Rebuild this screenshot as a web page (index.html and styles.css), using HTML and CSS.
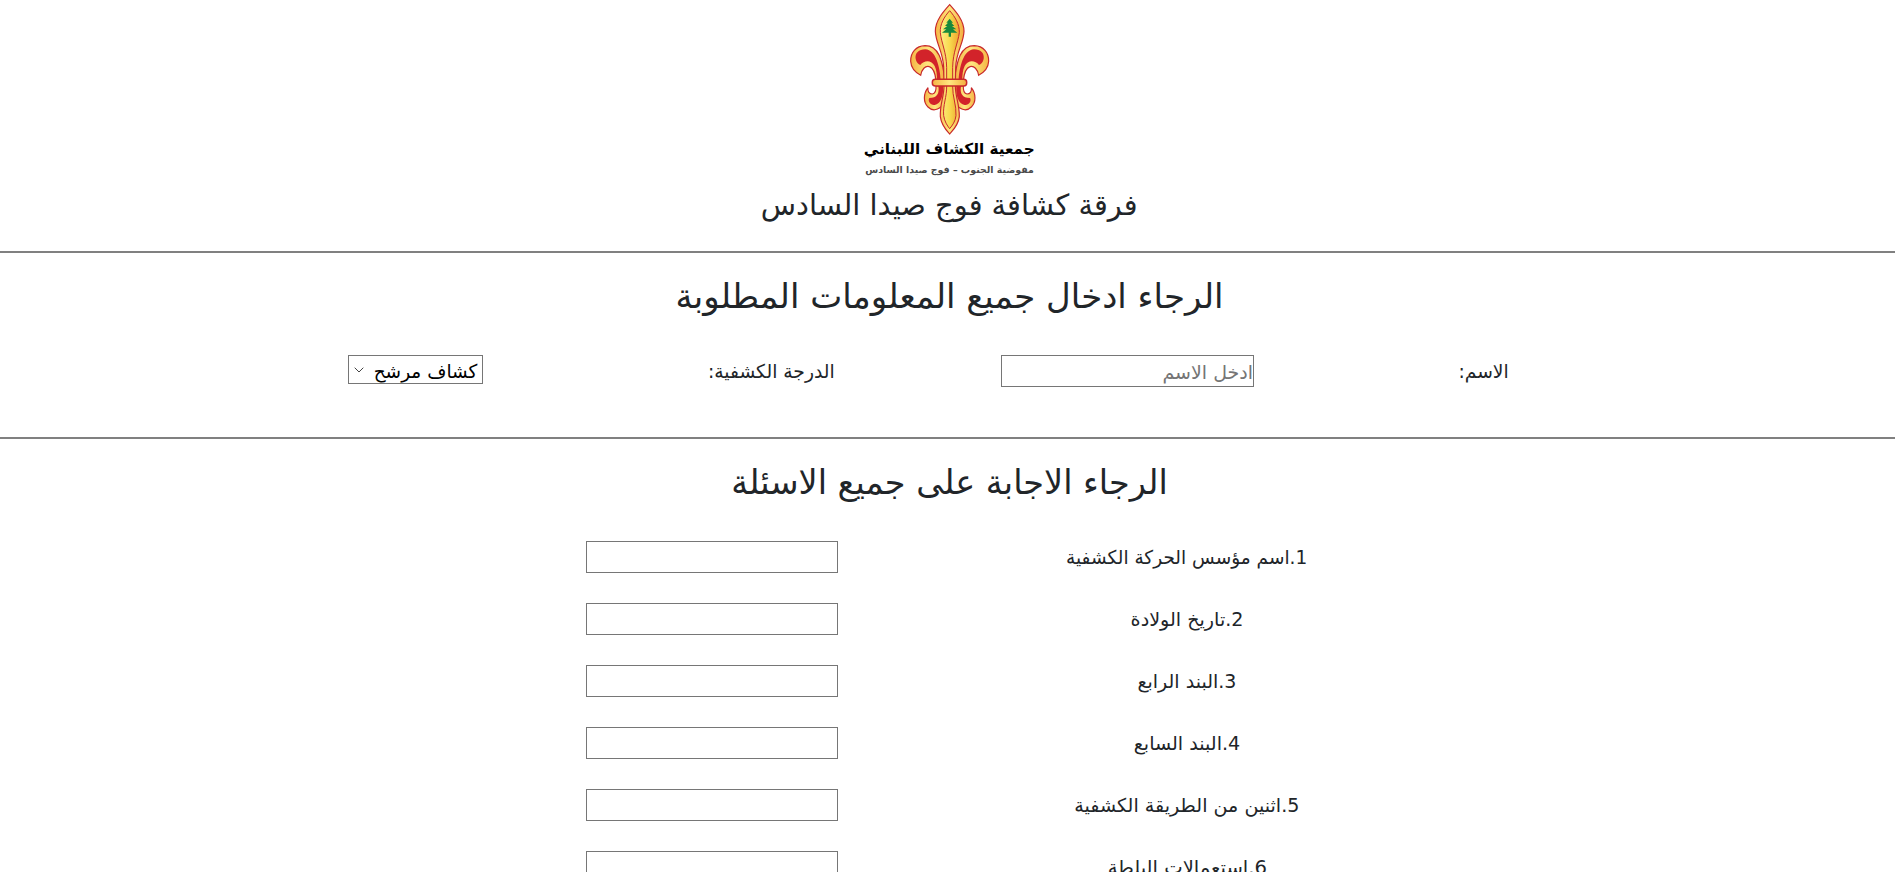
FILE: index.html
```html
<!DOCTYPE html>
<html lang="ar">
<head>
<meta charset="utf-8">
<title>فرقة كشافة فوج صيدا السادس</title>
<link rel="stylesheet" href="styles.css">
</head>
<body>
<div class="page" dir="rtl">
  <header class="header">
    <svg class="emblem" viewBox="0 0 300 420" aria-hidden="true">
      <defs>
        <linearGradient id="gold" x1="0" x2="1" y1="0" y2="0">
          <stop offset="0" stop-color="#f5b544"/><stop offset=".5" stop-color="#ffe680"/><stop offset="1" stop-color="#f3ad3d"/>
        </linearGradient>
        <linearGradient id="core" x1="0" x2="1" y1="0" y2="0">
          <stop offset="0" stop-color="#fdee86"/><stop offset=".5" stop-color="#f8d94e"/><stop offset="1" stop-color="#eca32e"/>
        </linearGradient>
        <g id="side">
          <path class="gold" d="M136 242C128 205 126 137 75 137C48 138 31 158 32 184C33 203 45 217 62 226C65 208 76 196 88 200C101 204 106 222 108 242Z"/>
          <path class="red" d="M122 240C120 203 108 149 76 148C56 148 44 160 47 177C49 187 55 193 61 195C73 179 95 180 104 198C110 211 111 225 111 240Z"/>
          <path class="gold" d="M108 258C109 273 107 280 97 282C88 282 82 275 84 263C70 281 69 306 84 321C101 338 126 327 134 302L138 258Z"/>
          <path class="red" d="M115 258C119 281 111 294 88 294C82 303 92 317 104 315C122 311 131 289 129 258Z"/>
        </g>
      </defs>
      <use href="#side"/>
      <use href="#side" transform="translate(298 0) scale(-1 1)"/>
      <path class="gold" d="M149 14C129 36 106 62 106 94C107 130 129 153 131 202L132 258C132 290 119 315 121 350C124 376 138 390 149 402C160 390 175 376 178 350C179 315 166 290 166 258L167 202C169 153 191 130 192 94C192 62 169 36 149 14Z"/>
      <path class="core" d="M149 32C133 50 119 73 121 98C124 129 139 155 140 202L140 258C141 290 128 316 131 347C134 365 141 376 149 386C157 376 166 365 168 347C170 316 157 290 158 258L158 202C159 155 174 129 178 98C179 73 165 50 149 32Z"/>
      <path class="cedar" d="M149 56L139 68H144L135 78H142L129 88H139L126 98H146V110H153V98H172L159 88H169L156 78H163L154 68H159Z"/>
      <rect class="gold band" x="97" y="238" width="103" height="20" rx="9"/>
    </svg>
    <div class="logo-name"><span class="fit t1">جمعية الكشاف اللبناني</span></div>
    <div class="logo-sub"><span class="fit t2">مفوضية الجنوب – فوج صيدا السادس</span></div>
    <h1 class="title"><span class="fit t3">فرقة كشافة فوج صيدا السادس</span></h1>
  </header>
  <section class="section info">
    <h2 class="heading"><span class="fit">الرجاء ادخال جميع المعلومات المطلوبة</span></h2>
    <div class="fields">
      <div class="cell"><span class="fit t5">الاسم:</span></div>
      <div class="cell"><div class="box name"><span class="fit">ادخل الاسم</span></div></div>
      <div class="cell"><span class="fit t7">الدرجة الكشفية:</span></div>
      <div class="cell"><div class="box select"><span class="fit t8">كشاف مرشح</span><svg class="chevron" viewBox="0 0 10 6"><path d="M.7.7L5 5L9.3.7"/></svg></div></div>
    </div>
  </section>
  <section class="section">
    <h2 class="heading"><span class="fit t9">الرجاء الاجابة على جميع الاسئلة</span></h2>
    <div class="questions">
      <div class="question"><span class="fit q1">1.اسم مؤسس الحركة الكشفية</span></div><div class="cell"><div class="box"></div></div>
      <div class="question"><span class="fit q2">2.تاريخ الولادة</span></div><div class="cell"><div class="box"></div></div>
      <div class="question"><span class="fit q3">3.البند الرابع</span></div><div class="cell"><div class="box"></div></div>
      <div class="question"><span class="fit q4">4.البند السابع</span></div><div class="cell"><div class="box"></div></div>
      <div class="question"><span class="fit q5">5.اثنين من الطريقة الكشفية</span></div><div class="cell"><div class="box"></div></div>
      <div class="question"><span class="fit q6">6.استعمالات البلطة</span></div><div class="cell"><div class="box"></div></div>
    </div>
  </section>
</div>
</body>
</html>
```
FILE: styles.css
```css
* { box-sizing: border-box; }
html, body { margin: 0; height: 872px; overflow: hidden; background: #fff; }
body { font: 19px/30px "DejaVu Sans", sans-serif; color: #212529; }
.page { width: 1899px; }
.fit { display: inline-block; white-space: nowrap; }
.header { height: 251px; display: flex; flex-direction: column; align-items: center; }
.emblem { width: 100px; height: 140px; flex: none; }
.gold { fill: url(#gold); stroke: #c8282a; stroke-width: 3.5; }
.core { fill: url(#core); stroke: #c8282a; stroke-width: 3; }
.band { stroke-width: 4.5; }
.red { fill: #d2232a; }
.cedar { fill: #17893c; }
.logo-name { height: 20px; line-height: 19px; font-size: 15px; font-weight: bold; color: #000; }
.logo-sub { height: 20px; line-height: 20px; font-size: 9.4px; font-weight: bold; color: #4a4a4a; }
.title { margin: 3px 0 0; font-weight: 400; font-size: 29px; line-height: 44px; }
.t1 { transform: scaleX(1.015); }
.t3 { transform: scaleX(.996); }
.t5, .t7 { transform: scaleX(.985); }
.t8 { transform: scaleX(.975); transform-origin: right; }
.t9 { transform: scaleX(.985); }
.q1 { transform: scaleX(.975); }
.q2, .q4, .q5 { transform: scaleX(1.007); }
.q6 { transform: scaleX(1.03); }
.section { border-top: 2px solid gray; }
.info { height: 186px; }
.heading { margin: 0; padding-top: 19px; text-align: center; font-weight: 400; font-size: 34px; line-height: 48px; height: 102px; }
.fields { display: grid; grid-template-columns: repeat(4, 356px); justify-content: center; line-height: 33px; }
.cell, .question { display: flex; justify-content: center; align-items: flex-start; }
.box { width: 252px; height: 32px; border: 1px solid #767676; background: #fff; }
.name { width: 253px; color: #757575; }
.select { width: 135px; height: 29px; display: flex; justify-content: space-between; color: #000; padding: 0 5px; line-height: 31px; }
.chevron { width: 10px; height: 6px; margin-top: 11px; fill: none; stroke: #444; }
.questions { display: grid; grid-template-columns: repeat(2, 474.75px); grid-auto-rows: 62px; justify-content: center; line-height: 33px; }
```
